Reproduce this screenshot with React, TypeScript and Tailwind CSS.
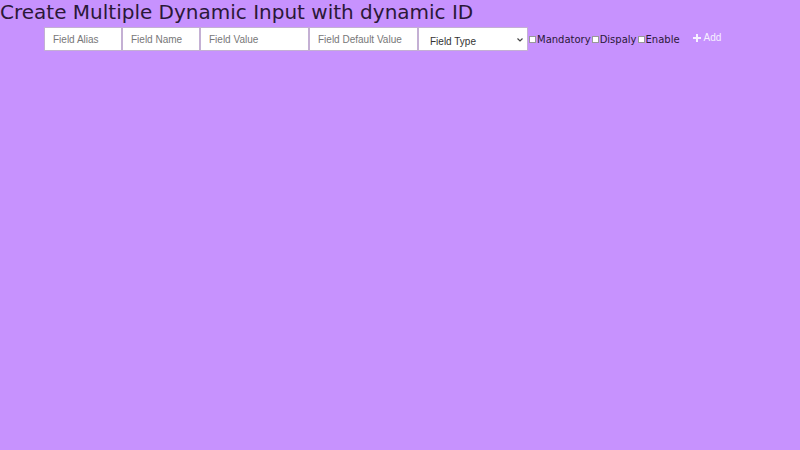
import { useState } from "react";

export default function App() {
  const [fieldType, setFieldType] = useState("");

  return (
    <div className="min-h-[450px] w-full bg-[#c792fe] font-['DejaVu_Sans',sans-serif] text-[#2b1838]">
      <h1 className="text-[20px] leading-[22px] pt-px whitespace-nowrap">
        Create Multiple Dynamic Input with dynamic ID
      </h1>
      <div className="flex items-center mt-[4px] pl-[44px]">
        <input
          type="text"
          placeholder="Field Alias"
          className="w-[78px] h-[24px] bg-white border border-[#c4b0d4] px-[8px] text-[10px] font-['Liberation_Sans',sans-serif] placeholder:text-[#777] outline-none"
        />
        <input
          type="text"
          placeholder="Field Name"
          className="w-[78px] h-[24px] bg-white border border-[#c4b0d4] px-[8px] text-[10px] font-['Liberation_Sans',sans-serif] placeholder:text-[#777] outline-none"
        />
        <input
          type="text"
          placeholder="Field Value"
          className="w-[109px] h-[24px] bg-white border border-[#c4b0d4] px-[8px] text-[10px] font-['Liberation_Sans',sans-serif] placeholder:text-[#777] outline-none"
        />
        <input
          type="text"
          placeholder="Field Default Value"
          className="w-[109px] h-[24px] bg-white border border-[#c4b0d4] px-[8px] text-[10px] font-['Liberation_Sans',sans-serif] placeholder:text-[#777] outline-none"
        />
        <div className="relative w-[110px] h-[24px] bg-white border border-[#c4b0d4]">
          <select
            value={fieldType}
            onChange={(e) => setFieldType(e.target.value)}
            className="appearance-none w-full h-full bg-transparent pl-[11px] text-[10px] text-[#333] font-['Liberation_Sans',sans-serif] outline-none"
          >
            <option value="">Field Type</option>
            <option value="text">Text</option>
            <option value="number">Number</option>
          </select>
          <svg
            className="absolute right-[4px] top-[10px] pointer-events-none"
            width="6"
            height="4"
            viewBox="0 0 6 4"
          >
            <path d="M0.5 0.5 L3 3 L5.5 0.5" fill="none" stroke="#444" strokeWidth="1.2" />
          </svg>
        </div>
        <label className="flex items-center text-[10px]">
          <span className="w-[7px] h-[7px] ml-[1px] mr-px bg-white border border-[#999]" />
          Mandatory
        </label>
        <label className="flex items-center text-[10px]">
          <span className="w-[7px] h-[7px] ml-[1px] mr-px bg-white border border-[#999]" />
          Dispaly
        </label>
        <label className="flex items-center text-[10px]">
          <span className="w-[7px] h-[7px] ml-[1px] mr-px bg-white border border-[#999]" />
          Enable
        </label>
        <button className="flex items-center gap-[3px] ml-[13px] -mt-[3px] text-[#f6f0ff] text-[10px] font-['Liberation_Sans',sans-serif]">
          <svg width="8" height="8" viewBox="0 0 8 8">
            <path d="M4 0 V8 M0 4 H8" stroke="#f6f0ff" strokeWidth="2" />
          </svg>
          Add
        </button>
      </div>
    </div>
  );
}
